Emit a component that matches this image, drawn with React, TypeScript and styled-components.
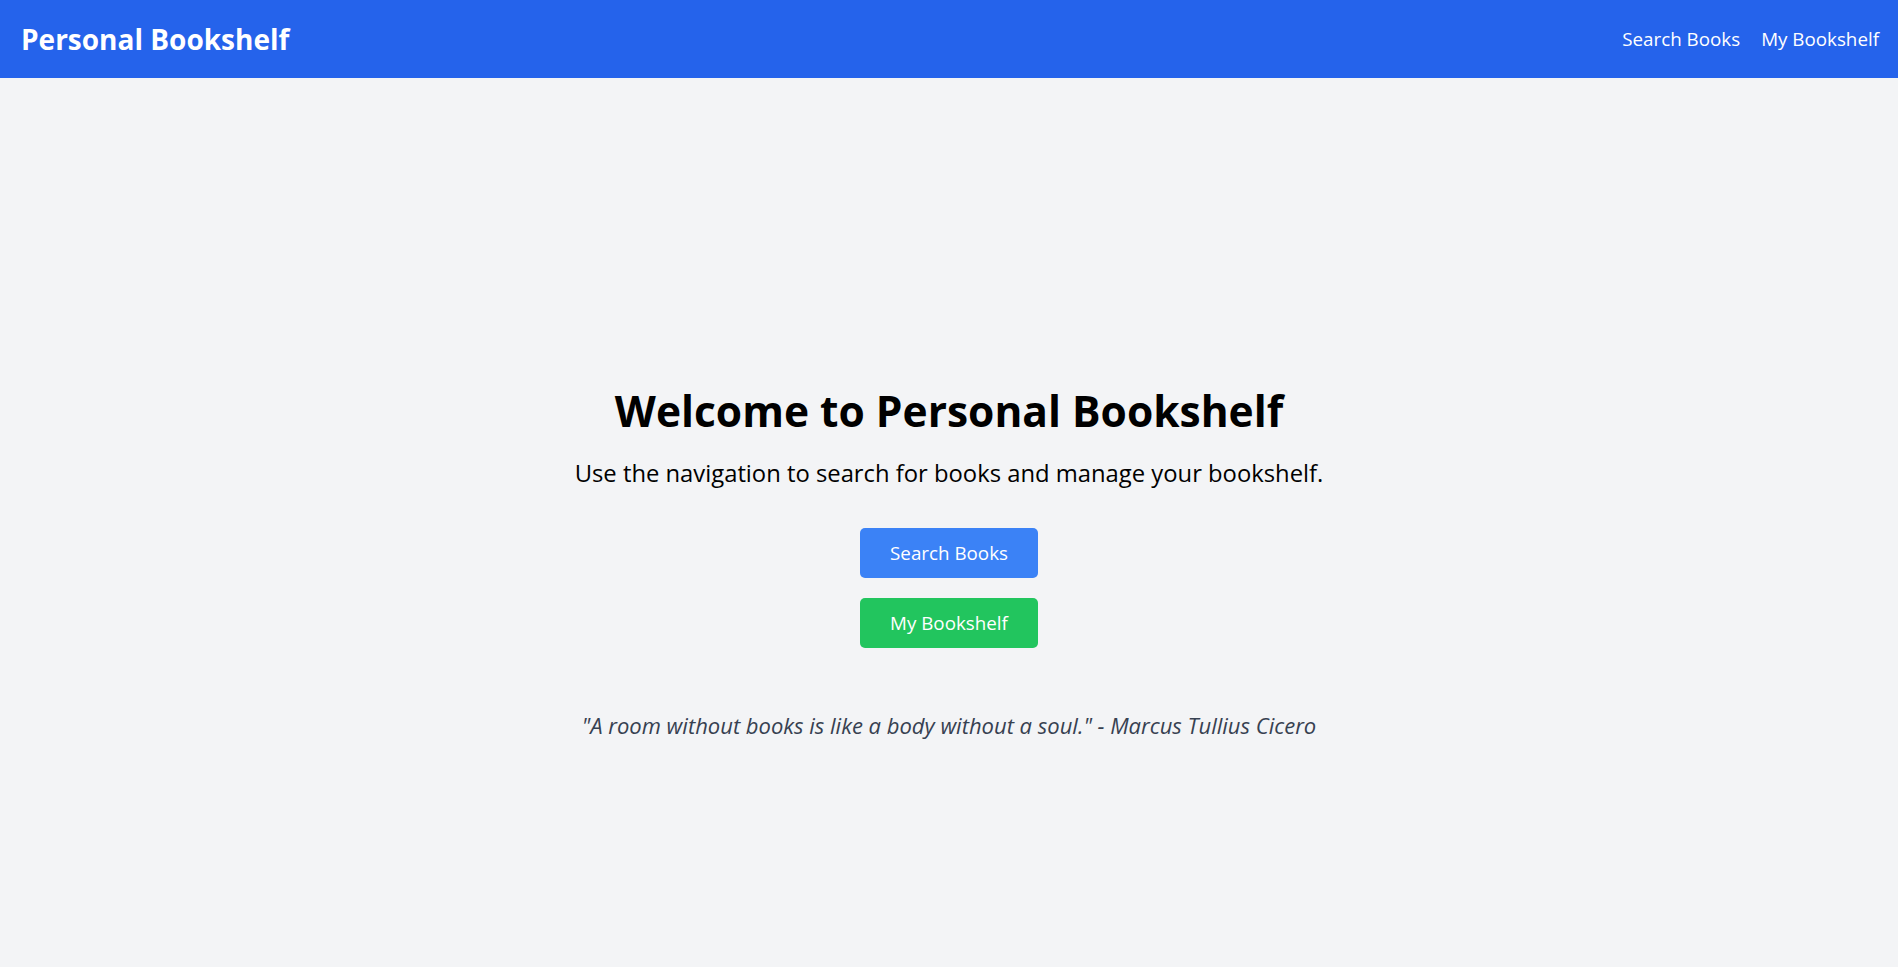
import React from "react";
import styled, { createGlobalStyle } from "styled-components";

const GlobalStyle = createGlobalStyle`
  * {
    box-sizing: border-box;
  }
  body {
    margin: 0;
    font-family: "Open Sans", "Noto Sans", sans-serif;
    background: #f3f4f6;
    color: #000;
  }
`;

const Header = styled.header`
  height: 78px;
  background: #2563eb;
  color: #fff;
  display: flex;
  align-items: center;
  justify-content: space-between;
  padding: 0 19px 0 21px;
`;

const Brand = styled.div`
  font-size: 28px;
  font-weight: 700;
`;

const Nav = styled.nav`
  display: flex;
  gap: 21px;
`;

const NavLink = styled.a`
  font-size: 18.8px;
  color: #fff;
  text-decoration: none;
  cursor: pointer;
`;

const Main = styled.main`
  min-height: 100vh;
  padding-top: 3px;
  display: flex;
  flex-direction: column;
  align-items: center;
  justify-content: center;
  text-align: center;
`;

const Title = styled.h1`
  margin: 0 0 20px;
  font-size: 42.5px;
  line-height: 50px;
  font-weight: 700;
`;

const Lead = styled.p`
  margin: 0 0 37px;
  font-size: 23.8px;
  line-height: 35px;
`;

const Actions = styled.div`
  display: flex;
  flex-direction: column;
  align-items: center;
  gap: 20px;
`;

const Button = styled.button<{ $tone: "blue" | "green" }>`
  height: 50px;
  padding: 0 30px;
  border: none;
  border-radius: 5px;
  font-family: inherit;
  font-size: 18.8px;
  color: #fff;
  background: ${(p) => (p.$tone === "blue" ? "#3b82f6" : "#22c55e")};
  cursor: pointer;
`;

const Quote = styled.p`
  margin: 61px 0 0;
  font-size: 22px;
  line-height: 32px;
  font-style: italic;
  color: #374151;
`;

export default function App() {
  return (
    <>
      <GlobalStyle />
      <Header>
        <Brand>Personal Bookshelf</Brand>
        <Nav>
          <NavLink>Search Books</NavLink>
          <NavLink>My Bookshelf</NavLink>
        </Nav>
      </Header>
      <Main>
        <Title>Welcome to Personal Bookshelf</Title>
        <Lead>Use the navigation to search for books and manage your bookshelf.</Lead>
        <Actions>
          <Button $tone="blue">Search Books</Button>
          <Button $tone="green">My Bookshelf</Button>
        </Actions>
        <Quote>"A room without books is like a body without a soul." - Marcus Tullius Cicero</Quote>
      </Main>
    </>
  );
}
